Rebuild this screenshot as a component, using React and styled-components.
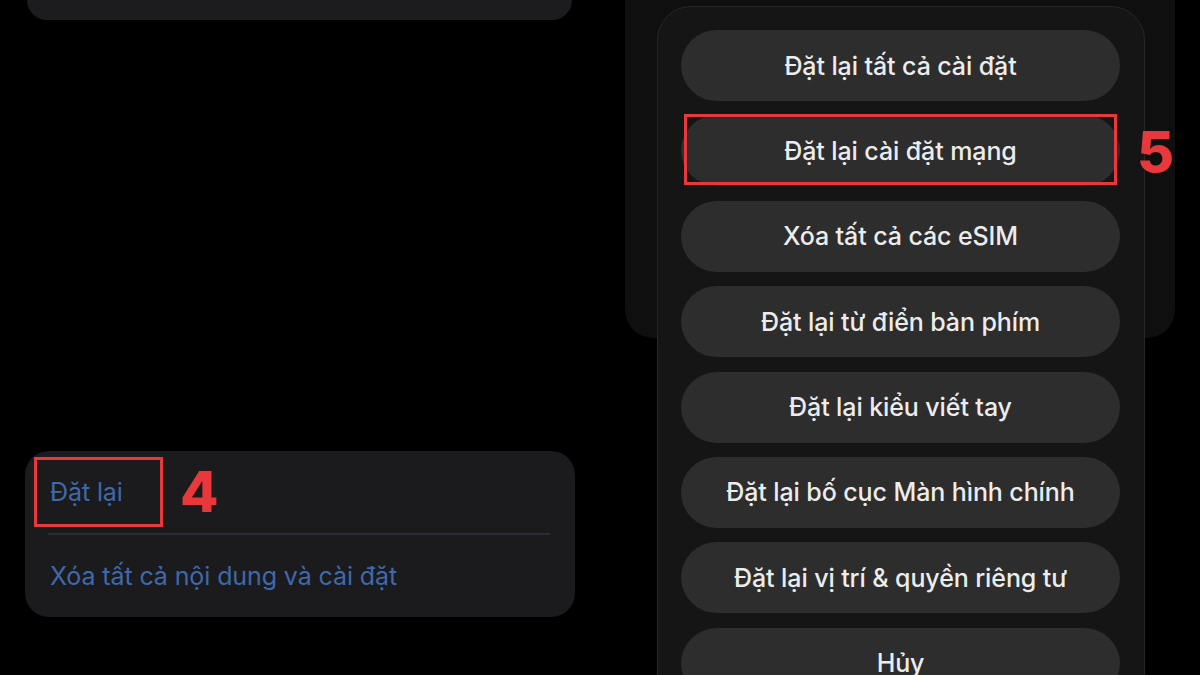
import React from "react";
import styled, { createGlobalStyle } from "styled-components";

const Global = createGlobalStyle`
  html, body {
    margin: 0;
    padding: 0;
    background: #000;
  }
  body {
    font-family: "Inter", "Noto Sans", "Liberation Sans", sans-serif;
    -webkit-font-smoothing: antialiased;
  }
`;

const ACCENT = "#e8383b";

const Page = styled.div`
  display: flex;
  width: 1200px;
  height: 675px;
  overflow: hidden;
  background: #000;
`;

/* ---------- left: dimmed settings list ---------- */

const LeftPane = styled.div`
  width: 600px;
  flex: none;
  display: flex;
  flex-direction: column;
`;

const TopCard = styled.div`
  height: 20px;
  margin: 0 28px 0 27px;
  background: #1c1c1e;
  border-radius: 0 0 22px 22px;
`;

const ResetCard = styled.div`
  margin: 431px 25px 0 25px;
  height: 166px;
  background: #1b1b1d;
  border-radius: 24px;
  display: flex;
  flex-direction: column;
`;

const Row = styled.div`
  height: ${(p) => p.$h}px;
  display: flex;
  align-items: center;
  padding-left: ${(p) => p.$pad}px;
  color: #3f69ab;
  font-size: 25px;
  letter-spacing: -0.1px;
`;

const Divider = styled.div`
  height: 2px;
  margin: 0 25px 0 23px;
  background: #2b2c31;
`;

const MarkedBox = styled.div`
  box-sizing: border-box;
  width: 129px;
  height: 70px;
  border: 3px solid ${ACCENT};
  padding-left: 13px;
  display: flex;
  align-items: center;
`;

const StepNum = styled.span`
  font-family: "Inter", "Noto Sans", sans-serif;
  font-weight: 800;
  font-size: 56px;
  line-height: 1;
  color: ${ACCENT};
  margin-left: ${(p) => p.$gap}px;
`;

/* ---------- right: reset action sheet ---------- */

const RightPane = styled.div`
  flex: 1;
  position: relative;
`;

const BackPanel = styled.div`
  margin-left: 25px;
  width: 550px;
  height: 338px;
  background: #0f0f0f;
  border-radius: 0 0 28px 28px;
`;

const Sheet = styled.div`
  position: absolute;
  left: 57px;
  top: 6px;
  width: 488px;
  bottom: -60px;
  box-sizing: border-box;
  padding: 23px 24px 0 23px;
  background: #151515;
  border: 1px solid #272727;
  border-radius: 34px;
  display: flex;
  flex-direction: column;
  gap: 14.4px;
`;

const SheetButton = styled.div`
  position: relative;
  flex: none;
  height: 71px;
  border-radius: 36px;
  background: #2d2d2d;
  color: #ececec;
  font-size: 25px;
  font-weight: 500;
  letter-spacing: -0.1px;
  display: flex;
  align-items: center;
  justify-content: center;

  ${(p) =>
    p.$marked &&
    `
    &::after {
      content: "";
      position: absolute;
      inset: -1px 3px 1px 3px;
      border: 3px solid ${ACCENT};
    }
  `}
`;

const SideNum = styled(StepNum)`
  position: absolute;
  left: calc(100% + 17px);
  top: 50%;
  transform: translateY(-50%);
  margin: 0;
  font-size: 57px;
`;

const actions = [
  "Đặt lại tất cả cài đặt",
  "Đặt lại cài đặt mạng",
  "Xóa tất cả các eSIM",
  "Đặt lại từ điển bàn phím",
  "Đặt lại kiểu viết tay",
  "Đặt lại bố cục Màn hình chính",
  "Đặt lại vị trí & quyền riêng tư",
  "Hủy",
];

export default function App() {
  return (
    <>
      <Global />
      <Page>
        <LeftPane>
          <TopCard />
          <ResetCard>
            <Row $h={82} $pad={9}>
              <MarkedBox>Đặt lại</MarkedBox>
              <StepNum $gap={17}>4</StepNum>
            </Row>
            <Divider />
            <Row $h={82} $pad={25}>
              Xóa tất cả nội dung và cài đặt
            </Row>
          </ResetCard>
        </LeftPane>

        <RightPane>
          <BackPanel />
          <Sheet>
            {actions.map((label, i) => (
              <SheetButton key={label} $marked={i === 1}>
                {label}
                {i === 1 && <SideNum>5</SideNum>}
              </SheetButton>
            ))}
          </Sheet>
        </RightPane>
      </Page>
    </>
  );
}
